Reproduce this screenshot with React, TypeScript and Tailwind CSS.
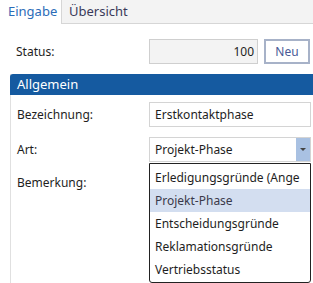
import React from "react";

const font = { fontFamily: '"Segoe UI", "Noto Sans", "Open Sans", sans-serif' };

export default function App() {
  const items = [
    "Erledigungsgründe (Ange",
    "Projekt-Phase",
    "Entscheidungsgründe",
    "Reklamationsgründe",
    "Vertriebsstatus",
  ];
  return (
    <div className="w-[313px] h-[283px] overflow-hidden bg-white text-[12px] text-[#1e1e1e] relative" style={font}>
      {/* tab bar */}
      <div className="flex h-[24px] bg-[#f3f3f3] border-b border-[#d6d6d6]">
        <div className="w-[61px] h-[24px] bg-white flex items-center pl-[8px] text-[#2b6cb8] text-[13px]">Eingabe</div>
        <div className="h-[23px] border-l border-[#d6d6d6] flex items-center pl-[7px] pr-[8px] text-[#3a3a5a] text-[13px]">Übersicht</div>
      </div>
      {/* status row */}
      <div className="flex items-center mt-[15px] h-[25px]">
        <div className="w-[149px] pl-[16px]">Status:</div>
        <div className="w-[109px] h-[25px] bg-[#f3f3f3] border border-[#cfcfcf] flex items-center justify-end pr-[3px]">100</div>
        <div className="ml-[6px] w-[46px] h-[25px] border-2 border-[#a7b2c8] flex items-center justify-center text-[#4a5a96] bg-white">Neu</div>
      </div>
      {/* panel */}
      <div className="ml-[10px] mt-[10px] border-l border-[#e0e0e0] h-[300px]">
        <div className="h-[21px] bg-[#155aa0] rounded-tl-[3px] -ml-px text-white flex items-center pl-[7px] text-[13px]">Allgemein</div>
        <div className="flex flex-col gap-[10px] pt-[7px]">
          <div className="flex items-center h-[25px]">
            <div className="w-[138px] pl-[6px]">Bezeichnung:</div>
            <div className="w-[162px] h-[25px] border border-[#d4d4d4] flex items-center pl-[5px]">Erstkontaktphase</div>
          </div>
          <div className="flex items-center h-[25px]">
            <div className="w-[138px] pl-[6px]">Art:</div>
            <div className="w-[162px] h-[25px] border border-[#d4d4d4] flex items-center">
              <div className="flex-1 pl-[5px]">Projekt-Phase</div>
              <div className="w-[14px] h-full bg-[#a9c1e2] flex items-center justify-center">
                <div className="w-0 h-0 border-l-[3px] border-r-[3px] border-t-[3px] border-l-transparent border-r-transparent border-t-[#444]" />
              </div>
            </div>
          </div>
          <div className="flex h-[25px]">
            <div className="w-[138px] pl-[6px] pt-[2px]">Bemerkung:</div>
          </div>
        </div>
      </div>
      {/* dropdown */}
      <div className="absolute left-[149px] top-[163px] w-[162px] h-[120px] border border-[#222] rounded-b-[3px] bg-white pt-[2px] overflow-hidden">
        {items.map((t, i) => (
          <div
            key={t}
            className={`h-[23px] flex items-center pl-[5px] whitespace-nowrap overflow-hidden ${i === 1 ? "bg-[#d3def0] text-[#3a3a4a]" : ""}`}
          >
            {t}
          </div>
        ))}
      </div>
    </div>
  );
}
